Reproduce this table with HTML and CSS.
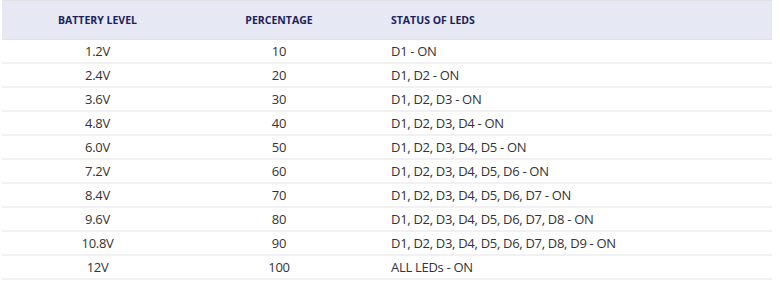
FILE: index.html
```html
<!DOCTYPE html>
<html>
<head>
<meta charset="utf-8">
<link rel="stylesheet" href="styles.css">
</head>
<body>
<table class="leds">
  <thead>
    <tr><th class="c1">Battery Level</th><th class="c2">Percentage</th><th class="c3">Status of LEDs</th></tr>
  </thead>
  <tbody>
    <tr><td class="c1">1.2V</td><td class="c2">10</td><td class="c3">D1 - ON</td></tr>
    <tr><td class="c1">2.4V</td><td class="c2">20</td><td class="c3">D1, D2 - ON</td></tr>
    <tr><td class="c1">3.6V</td><td class="c2">30</td><td class="c3">D1, D2, D3 - ON</td></tr>
    <tr><td class="c1">4.8V</td><td class="c2">40</td><td class="c3">D1, D2, D3, D4 - ON</td></tr>
    <tr><td class="c1">6.0V</td><td class="c2">50</td><td class="c3">D1, D2, D3, D4, D5 - ON</td></tr>
    <tr><td class="c1">7.2V</td><td class="c2">60</td><td class="c3">D1, D2, D3, D4, D5, D6 - ON</td></tr>
    <tr><td class="c1">8.4V</td><td class="c2">70</td><td class="c3">D1, D2, D3, D4, D5, D6, D7 - ON</td></tr>
    <tr><td class="c1">9.6V</td><td class="c2">80</td><td class="c3">D1, D2, D3, D4, D5, D6, D7, D8 - ON</td></tr>
    <tr><td class="c1">10.8V</td><td class="c2">90</td><td class="c3">D1, D2, D3, D4, D5, D6, D7, D8, D9 - ON</td></tr>
    <tr><td class="c1">12V</td><td class="c2">100</td><td class="c3">ALL LEDs - ON</td></tr>
  </tbody>
</table>
</body>
</html>
```
FILE: styles.css
```css
html, body {
  margin: 0;
  padding: 0;
  background: #ffffff;
}
body {
  padding: 0 8px 0 2px;
  font-family: "Open Sans", "Liberation Sans", sans-serif;
}
.leds {
  width: 770px;
  border-collapse: collapse;
  table-layout: fixed;
}
.leds th {
  height: 38px;
  padding: 0;
  background: #e6e8f3;
  border-top: 1px solid #e2e2e6;
  border-bottom: 1px solid #e9dfe6;
  color: #1b1f5c;
  font-size: 10.5px;
  font-weight: 700;
  letter-spacing: 0;
  text-transform: uppercase;
  vertical-align: middle;
}
.leds td {
  height: 22px;
  padding: 0;
  border-bottom: 2px solid #f1f1f3;
  color: #333333;
  font-size: 13px;
  letter-spacing: -0.3px;
  line-height: 22px;
  vertical-align: middle;
}
.c1 { width: 191px; text-align: center; }
.c2 { width: 172px; text-align: center; }
.c3 { text-align: left; padding-left: 26px !important; }
```
